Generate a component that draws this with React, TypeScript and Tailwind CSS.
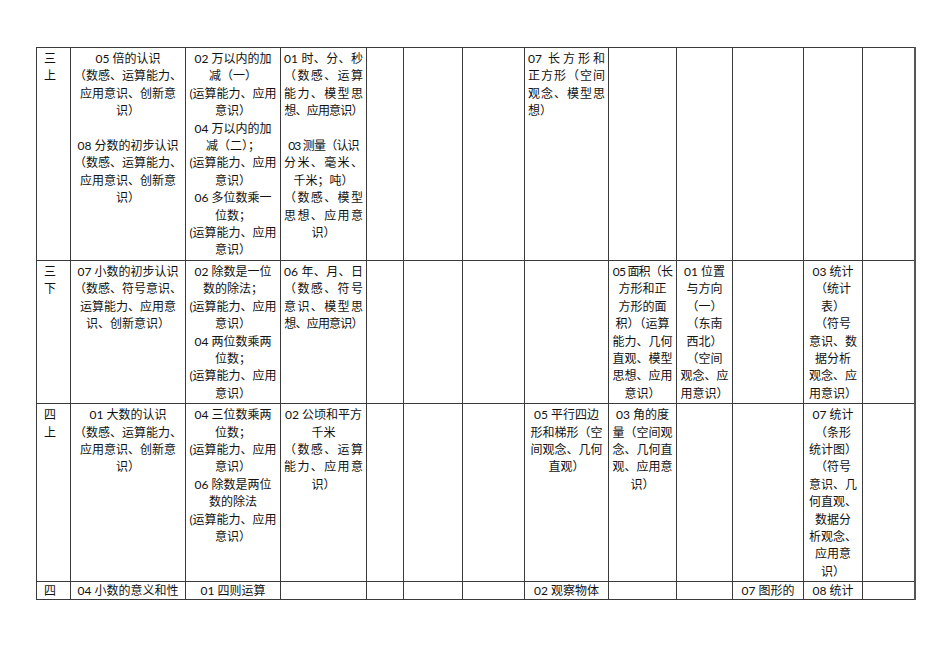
import React from 'react';

type Cell = { lines: string[]; align?: 'l' | 'c' } | null;

const colWidths = [34, 115, 95, 86, 37, 59, 62, 84, 68, 56, 71, 59, 52];

const ABILITY = '(运算能力、应用';

// '|' = justified full line, '~' = tightened line
const rows: Cell[][] = [
  [
    { lines: ['三', '上'], align: 'l' },
    {
      lines: [
        '05 倍的认识',
        '（数感、运算能力、',
        '应用意识、创新意',
        '识）',
        '',
        '08 分数的初步认识',
        '（数感、运算能力、',
        '应用意识、创新意',
        '识）',
      ],
    },
    {
      lines: [
        '02 万以内的加',
        '减（一）',
        ABILITY,
        '意识）',
        '04 万以内的加',
        '减（二）；',
        ABILITY,
        '意识）',
        '06 多位数乘一',
        '位数；',
        ABILITY,
        '意识）',
      ],
    },
    {
      lines: [
        '|01 时、分、秒',
        '|（数感、运算',
        '|能力、模型思',
        '~想、应用意识）',
        '',
        '~03 测量（认识',
        '|分米、毫米、',
        '千米；吨）',
        '|（数感、模型',
        '|思想、应用意',
        '识）',
      ],
    },
    null,
    null,
    null,
    { lines: ['|07 长方形和', '|正方形（空间', '|观念、模型思', '想）'], align: 'l' },
    null,
    null,
    null,
    null,
    null,
  ],
  [
    { lines: ['三', '下'], align: 'l' },
    { lines: ['07 小数的初步认识', '（数感、符号意识、', '运算能力、应用意', '识、创新意识）'] },
    {
      lines: ['02 除数是一位', '数的除法；', ABILITY, '意识）', '04 两位数乘两', '位数；', ABILITY, '意识）'],
    },
    { lines: ['|06 年、月、日', '|（数感、符号', '|意识、模型思', '~想、应用意识）'] },
    null,
    null,
    null,
    null,
    {
      lines: ['~05 面积（长', '方形和正', '方形的面', '积）（运算', '能力、几何', '直观、模型', '思想、应用', '意识）'],
    },
    { lines: ['01 位置', '与方向', '（一）', '（东南', '西北）', '（空间', '观念、应', '用意识）'] },
    null,
    { lines: ['03 统计', '（统计', '表）', '（符号', '意识、数', '据分析', '观念、应', '用意识）'] },
    null,
  ],
  [
    { lines: ['四', '上'], align: 'l' },
    { lines: ['01 大数的认识', '（数感、运算能力、', '应用意识、创新意', '识）'] },
    {
      lines: ['04 三位数乘两', '位数；', ABILITY, '意识）', '06 除数是两位', '数的除法', ABILITY, '意识）'],
    },
    { lines: ['02 公顷和平方', '千米', '|（数感、运算', '|能力、应用意', '识）'] },
    null,
    null,
    null,
    { lines: ['05 平行四边', '形和梯形（空', '间观念、几何', '直观）'] },
    { lines: ['03 角的度', '量（空间观', '念、几何直', '观、应用意', '识）'] },
    null,
    null,
    {
      lines: ['07 统计', '（条形', '统计图）', '（符号', '意识、几', '何直观、', '数据分', '析观念、', '应用意', '识）'],
    },
    null,
  ],
  [
    { lines: ['四'], align: 'l' },
    { lines: ['04 小数的意义和性'] },
    { lines: ['01 四则运算'] },
    null,
    null,
    null,
    null,
    { lines: ['02 观察物体'] },
    null,
    null,
    { lines: ['07 图形的'] },
    { lines: ['08 统计'] },
    null,
  ],
];

const Line = ({ text, left }: { text: string; left: boolean }) => {
  if (text === '') return <div>&nbsp;</div>;
  if (text.startsWith('|')) {
    return <div className="text-justify [text-align-last:justify] whitespace-nowrap">{text.slice(1)}</div>;
  }
  if (text.startsWith('~')) {
    return (
      <div className={`flex whitespace-nowrap tracking-[-0.8px] ${left ? 'justify-start' : 'justify-center'}`}>
        {text.slice(1)}
      </div>
    );
  }
  return (
    <div className={`flex whitespace-nowrap ${left ? 'justify-start' : 'justify-center'}`}>{text}</div>
  );
};

const App = () => {
  return (
    <div className="w-[950px] h-[672px] bg-white overflow-hidden pt-[47px] pl-[36px]">
      <table
        className="w-[878px] table-fixed border-collapse text-[12px] leading-[17.4px] text-[#111]"
        style={{ fontFamily: 'Lato, "Noto Sans CJK SC", sans-serif' }}
      >
        <colgroup>
          {colWidths.map((w, i) => (
            <col key={i} style={{ width: w }} />
          ))}
        </colgroup>
        <tbody>
          {rows.map((row, r) => (
            <tr key={r}>
              {row.map((cell, c) => (
                <td
                  key={c}
                  className={`border border-[#3a3a3a] align-top overflow-visible ${
                    r === 3 ? 'pt-px pb-0 leading-[16px]' : 'pt-[2px] pb-px'
                  } ${c === 12 ? 'border-r-2 border-r-[#555]' : ''} ${
                    c === 0 ? 'pl-[7px] pr-0' : 'px-[3px]'
                  }`}
                >
                  {cell ? cell.lines.map((t, i) => <Line key={i} text={t} left={cell.align === 'l'} />) : null}
                </td>
              ))}
            </tr>
          ))}
        </tbody>
      </table>
    </div>
  );
};

export default App;
